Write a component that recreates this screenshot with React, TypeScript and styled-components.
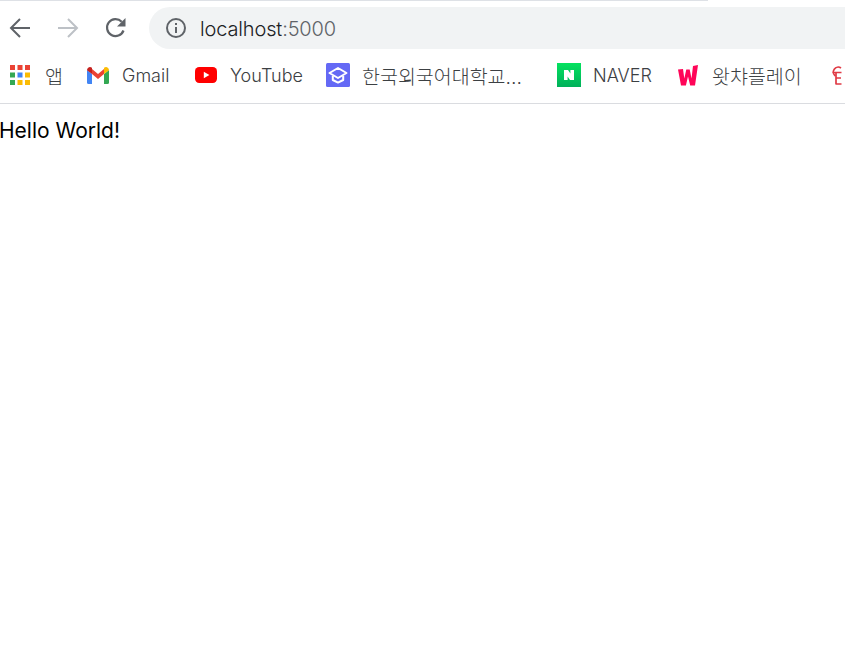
import React from "react";
import styled, { createGlobalStyle } from "styled-components";

const Global = createGlobalStyle`
  html, body { margin: 0; padding: 0; background: #fff; overflow: hidden; }
  body { font-family: Inter, "Noto Sans CJK KR", "Noto Sans", sans-serif; font-weight: 300; }
`;
const Page = styled.div`
  width: 845px;
  height: 657px;
  display: flex;
  flex-direction: column;
  overflow: hidden;
`;
const TabEdge = styled.div`
  width: 708px;
  height: 1px;
  background: #dee1e6;
  flex: none;
`;
const Toolbar = styled.div`
  height: 55px;
  flex: none;
  display: flex;
  align-items: flex-start;
  padding: 6px 0 0 8px;
  box-sizing: border-box;
`;
const NavButton = styled.div`
  width: 24px;
  height: 24px;
  margin: 9px 24px 0 0;
  flex: none;
  display: flex;
`;
const Omnibox = styled.div`
  margin-left: -3px;
  flex: 1;
  height: 42px;
  margin-right: -30px;
  border-radius: 21px;
  background: #f1f3f4;
  display: flex;
  align-items: center;
  padding-left: 16px;
  font-size: 20px;
  letter-spacing: -0.15px;
`;
const Address = styled.div`
  margin: 2px 0 0 13px;
`;
const Host = styled.span`
  color: #202124;
`;
const Port = styled.span`
  color: #5f6368;
`;
const Bookmarks = styled.div`
  height: 47px;
  flex: none;
  display: flex;
  align-items: flex-start;
  border-bottom: 1px solid #dadce0;
  overflow: hidden;
`;
const Bookmark = styled.div<{ $w: number; $gap: number; $pad: number }>`
  flex: none;
  width: ${(p) => p.$w}px;
  padding-left: ${(p) => p.$pad}px;
  box-sizing: border-box;
  height: 38px;
  display: flex;
  align-items: center;
  gap: ${(p) => p.$gap}px;
  font-size: 18px;
  color: #3c4043;
  white-space: nowrap;
`;
const Hangul = styled.span`
  font-size: 19.5px;
`;
const Glyph = styled.svg`
  flex: none;
  display: block;
`;
const Content = styled.div`
  font-size: 21px;
  font-weight: 400;
  line-height: 28px;
  color: #000;
  padding-top: 13px;
  margin-left: -1px;
`;

const Apps = () => {
  const colors = ["#ea4335", "#ea4335", "#ea4335", "#34a853", "#4285f4", "#fbbc04", "#34a853", "#fbbc04", "#fbbc04"];
  return (
    <Glyph width="20" height="20" viewBox="0 0 20 20">
      {colors.map((c, i) => (
        <rect key={i} x={(i % 3) * 7.5} y={Math.floor(i / 3) * 7.5} width="5" height="5" fill={c} />
      ))}
    </Glyph>
  );
};
const Gmail = () => (
  <Glyph width="22" height="17" viewBox="0 0 22 17">
    <path d="M0 3v12.5A1.5 1.5 0 0 0 1.5 17H5V7z" fill="#4285f4" />
    <path d="M22 3v12.5a1.5 1.5 0 0 1-1.5 1.5H17V7z" fill="#34a853" />
    <path d="M5 2 11 7l6-5v5l-6 5-6-5z" fill="#ea4335" />
    <path d="M0 3.2C0 .8 2.8-.8 4.6.6L5 1v6L0 3.2z" fill="#c5221f" />
    <path d="M22 3.2C22 .8 19.2-.8 17.4.6L17 1v6l5-3.8z" fill="#fbbc04" />
  </Glyph>
);
const YouTube = () => (
  <Glyph width="22" height="16" viewBox="0 0 22 16">
    <rect width="22" height="16" rx="4.2" fill="#ff0000" />
    <path d="M8.8 4.8v6.4L14.4 8z" fill="#fff" />
  </Glyph>
);
const School = () => (
  <Glyph width="24" height="24" viewBox="0 0 24 24">
    <rect width="24" height="24" rx="1.5" fill="#6469f5" />
    <path d="M12 5 3.5 10 12 15l8.5-5z" fill="none" stroke="#fff" strokeWidth="2" strokeLinejoin="round" />
    <path d="M6.8 13v4l5.2 2.6 5.2-2.6v-4" fill="none" stroke="#fff" strokeWidth="2" strokeLinejoin="round" />
  </Glyph>
);
const Naver = () => (
  <Glyph width="24" height="24" viewBox="0 0 24 24">
    <defs>
      <linearGradient id="nv" x1="0" y1="0" x2="0" y2="1">
        <stop offset="0" stopColor="#04e25f" />
        <stop offset="1" stopColor="#00b05a" />
      </linearGradient>
    </defs>
    <rect width="24" height="24" fill="url(#nv)" />
    <path d="M7 7h4l2.4 3.6V7H17v10h-4l-2.400-3.600V17H7z" fill="#fff" />
  </Glyph>
);
const Watcha = () => (
  <Glyph width="20" height="21" viewBox="0 0 20 21">
    <path d="M0 4.500 5 4l1.300 9.500L8.300 4.500h3.400l1.800 9L15 1l5-1-3 20.500h-4.800L10 11.500l-2.100 9H3z" fill="#ff0558" />
  </Glyph>
);
const Bulb = () => (
  <Glyph width="10" height="20" viewBox="0 0 10 20">
    <path d="M9 3A4.600 4.600 0 1 0 3.500 11" fill="none" stroke="#e03a45" strokeWidth="1.700" />
    <path d="M.5 7.500h9M4 7.500V19.500M4 13h5M4 19h5.500" fill="none" stroke="#e03a45" strokeWidth="1.700" />
  </Glyph>
);

export default function App() {
  return (
    <Page>
      <Global />
      <TabEdge />
      <Toolbar>
        <NavButton>
          <svg width="24" height="24" viewBox="0 0 24 24">
            <path d="M22 12H3.500M12 3l-9 9 9 9" fill="none" stroke="#5f6368" strokeWidth="2" />
          </svg>
        </NavButton>
        <NavButton>
          <svg width="24" height="24" viewBox="0 0 24 24">
            <path d="M2 12h18.500M12 3l9 9-9 9" fill="none" stroke="#bdc1c6" strokeWidth="2" />
          </svg>
        </NavButton>
        <NavButton>
          <svg width="24" height="24" viewBox="0 0 24 24">
            <path d="M19.500 14.500A8.500 8.500 0 1 1 17.700 5.700" fill="none" stroke="#5f6368" strokeWidth="2.200" />
            <path d="M21.500 2v8.500H13z" fill="#5f6368" />
          </svg>
        </NavButton>
        <Omnibox>
          <svg width="22" height="22" viewBox="0 0 22 22">
            <circle cx="11" cy="11" r="9" fill="none" stroke="#5f6368" strokeWidth="2" />
            <path d="M11 10v6M11 6v2" stroke="#5f6368" strokeWidth="2" />
          </svg>
          <Address>
            <Host>localhost</Host>
            <Port>:5000</Port>
          </Address>
        </Omnibox>
      </Toolbar>
      <Bookmarks>
        <Bookmark $w={87} $pad={10} $gap={15}><Apps /><Hangul>앱</Hangul></Bookmark>
        <Bookmark $w={108} $pad={0} $gap={13}><Gmail />Gmail</Bookmark>
        <Bookmark $w={131} $pad={0} $gap={13}><YouTube />YouTube</Bookmark>
        <Bookmark $w={231} $pad={0} $gap={12}><School /><Hangul>한국외국어대학교...</Hangul></Bookmark>
        <Bookmark $w={121} $pad={0} $gap={12}><Naver />NAVER</Bookmark>
        <Bookmark $w={154} $pad={0} $gap={14}><Watcha /><Hangul>왓챠플레이</Hangul></Bookmark>
        <Bookmark $w={30} $pad={0} $gap={0}><Bulb /></Bookmark>
      </Bookmarks>
      <Content>Hello World!</Content>
    </Page>
  );
}
